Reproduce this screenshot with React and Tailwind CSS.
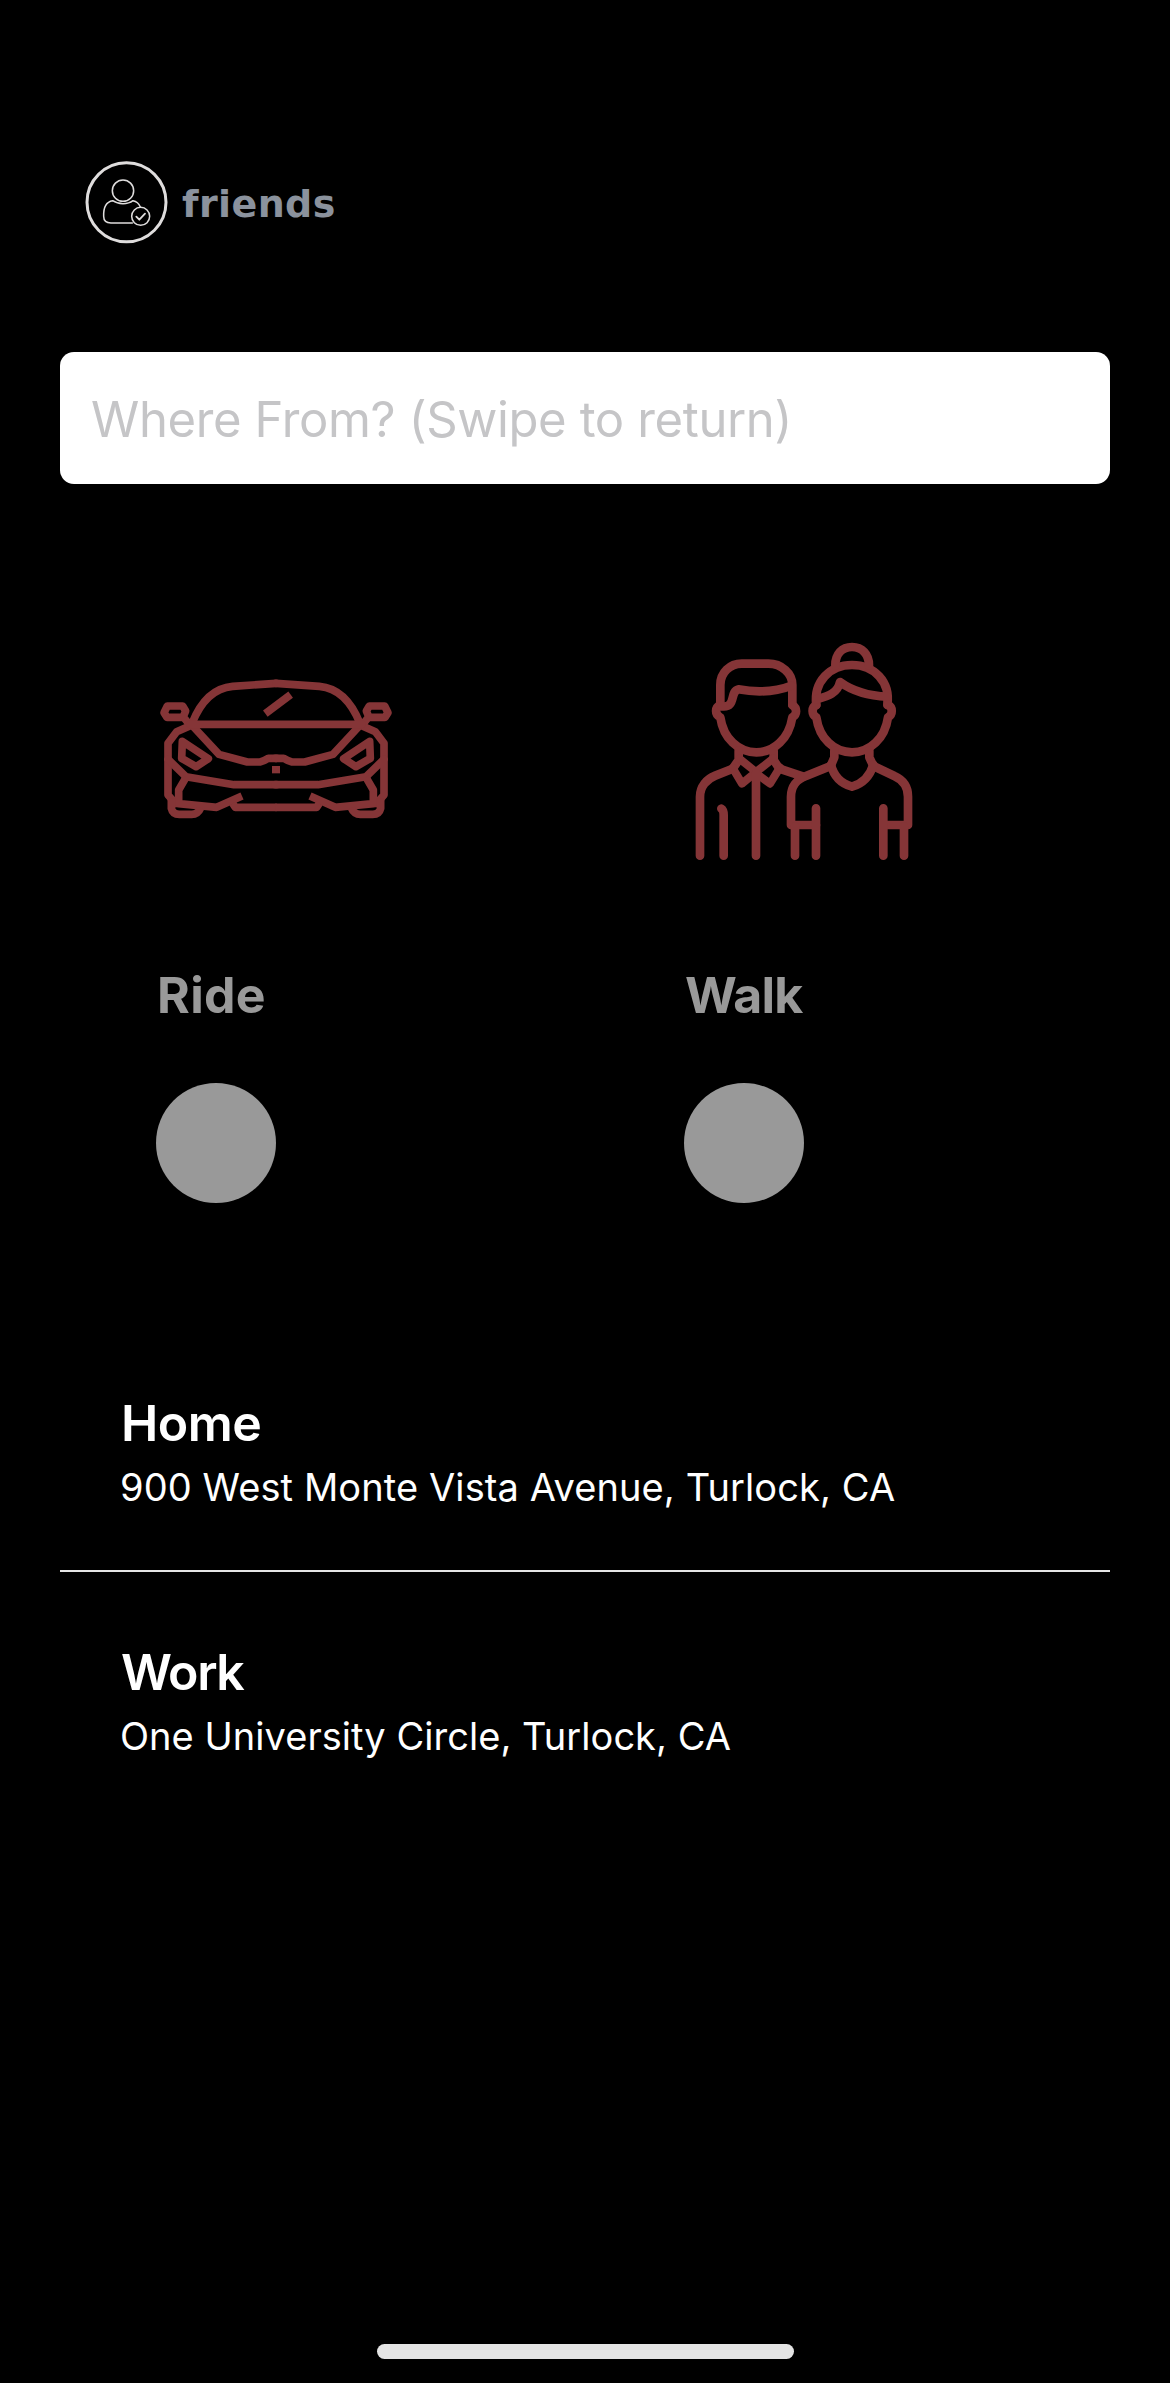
function FriendsIcon({ className }) {
  return (
    <svg className={className} viewBox="44 30 249 249" fill="none" stroke="#dfdddd" strokeLinejoin="round" strokeLinecap="round">
      <circle cx="168.5" cy="154" r="118.5" strokeWidth="9" />
      <g strokeWidth="4.6">
        <circle cx="158" cy="119" r="32" />
        <path d="M186 216 H122 C106 216 100 210 100 196 C99 170 108 152 127 149 C144 161 172 161 188 149 C200 151 206 158 210 168" />
        <circle cx="211" cy="196" r="27" />
        <path d="M198 197 L207 206 L224 188" strokeWidth="5.5" />
      </g>
    </svg>
  );
}

function CarIcon({ className }) {
  const side = (
    <>
      <path d="M378 70 L248 79 C190 84 150 130 126 190" />
      <path d="M118 193 L104 176 M52 138 H98 L107 153 L99 172 H51 L42 158 Z" />
      <path d="M128 198 L207 283 L292 306 H330 Q340 304 355 295 H380" />
      <path d="M124 196 L80 215 L54 250 V405 L76 430" />
      <path d="M54 298 L108 350 L252 374 H380" />
      <path d="M97 244 L175 296 L138 320 L95 295 Z" />
      <path d="M108 352 L86 390 V431 L200 442 L276 408" strokeLinecap="butt" />
      <path d="M248 430 L256 442 H380" strokeLinecap="butt" />
      <path d="M64 415 V445 Q68 463 88 463 H125 Q144 463 152 444" strokeLinecap="butt" />
    </>
  );
  return (
    <svg className={className} viewBox="0 0 750 525" fill="none" stroke="#853537" strokeWidth="23" strokeLinejoin="round" strokeLinecap="round">
      {side}
      <g transform="matrix(-1 0 0 1 756 0)">{side}</g>
      <path d="M120 193 H636" />
      <path d="M346 161 L422 104" strokeLinecap="butt" />
      <rect x="366" y="318" width="24" height="22" fill="#853537" stroke="none" />
    </svg>
  );
}

function PeopleIcon({ className }) {
  return (
    <svg className={className} viewBox="0 0 750 720" fill="none" stroke="#853537" strokeWidth="26" strokeLinejoin="round" strokeLinecap="round">
      <path d="M121 222 V165 C121 128 150 101 185 101 H265 C305 101 337 130 337 165 V225" />
      <path d="M121 225 C104 232 104 254 121 262 C130 325 175 367 229 367 C283 367 327 325 337 262 C352 254 352 234 337 225" />
      <path d="M125 229 C170 235 148 185 175 178 C225 187 285 186 334 167" />
      <path d="M60 677 V500 C60 470 80 447 106 437 L158 416 L176 390 V362 M281 362 V390 L298 416 L370 440" />
      <path d="M158 414 L186 461 L226 428 L270 461 L300 412 M178 386 L228 426 L279 386" strokeWidth="24" />
      <path d="M228 430 V677 M124 536 Q131 540 131 555 V677" />
      <path d="M409 225 C400 155 450 105 516 105 C582 105 632 155 622 225" />
      <path d="M409 225 C394 232 394 254 409 262 C418 325 462 367 516 367 C570 367 615 325 624 262 C639 254 639 232 624 225" />
      <path d="M466 106 C466 72 486 51 516 51 C546 51 567 72 567 106" />
      <path d="M410 208 C445 198 473 190 480 156 C520 185 570 198 622 200" />
      <path d="M463 362 V382 L452 408 L378 438 C350 448 333 470 333 500 V585 H408 M568 362 V382 L580 408 L643 438 C670 450 684 470 684 500 V585 H610" />
      <path d="M453 404 Q465 455 516 470 Q565 455 580 404" />
      <path d="M345 590 V677 M408 535 V677 M610 535 V677 M672 590 V677" />
    </svg>
  );
}

function Place({ title, address, titleClass, addressClass }) {
  return (
    <div className="pl-[60px]">
      <h2 className={`pl-px text-[50px] leading-[60px] font-semibold ${titleClass}`}>{title}</h2>
      <p className={`mt-2.5 text-[38px] leading-[48px] ${addressClass}`}>{address}</p>
    </div>
  );
}

export default function App() {
  return (
    <main className="flex h-[2383px] w-full flex-col bg-black px-[60px] pt-40 font-['Inter',sans-serif] text-white">
      <header className="flex h-[84px] items-center pl-[25px]">
        <FriendsIcon className="size-[83px]" />
        <span className="ml-[14px] pt-[4px] font-['DejaVu_Sans',sans-serif] text-[38px] font-bold tracking-[0.4px] text-[#8b929d]">friends</span>
      </header>

      <div className="mt-[108px] flex h-[132px] items-center rounded-[14px] bg-white pt-[4px] pl-[31px]">
        <span className="text-[49px] tracking-[-0.37px] text-[#c5c5c7]">Where From? (Swipe to return)</span>
      </div>

      <section className="mt-[146px] grid grid-cols-[530px_1fr] pl-[90px] text-[50px] leading-[60px] font-bold text-[#999]">
        <div>
          <CarIcon className="mt-[30px] h-[175px] w-[250px]" />
          <p className="mt-[130px] pl-[7px] tracking-[0.3px]">Ride</p>
          <div className="mt-[58px] ml-[6px] size-[120px] rounded-full bg-[#999]" />
        </div>
        <div>
          <PeopleIcon className="h-[240px] w-[250px]" />
          <p className="mt-[95px] pl-[5px] tracking-[-0.8px]">Walk</p>
          <div className="mt-[58px] ml-[4px] size-[120px] rounded-full bg-[#999]" />
        </div>
      </section>

      <section className="mt-[190px]">
        <Place title="Home" address="900 West Monte Vista Avenue, Turlock, CA" titleClass="tracking-[-0.5px]" addressClass="tracking-[0.1px]" />
        <hr className="mt-[59px] mb-[70px] border-t-2 border-[#e6e6e6]" />
        <Place title="Work" address="One University Circle, Turlock, CA" titleClass="tracking-[-1.4px]" addressClass="tracking-[0.04px]" />
      </section>

      <div className="mt-auto mb-6 ml-[317px] h-[15px] w-[417px] rounded-full bg-[#e4e4e4]" />
    </main>
  );
}
